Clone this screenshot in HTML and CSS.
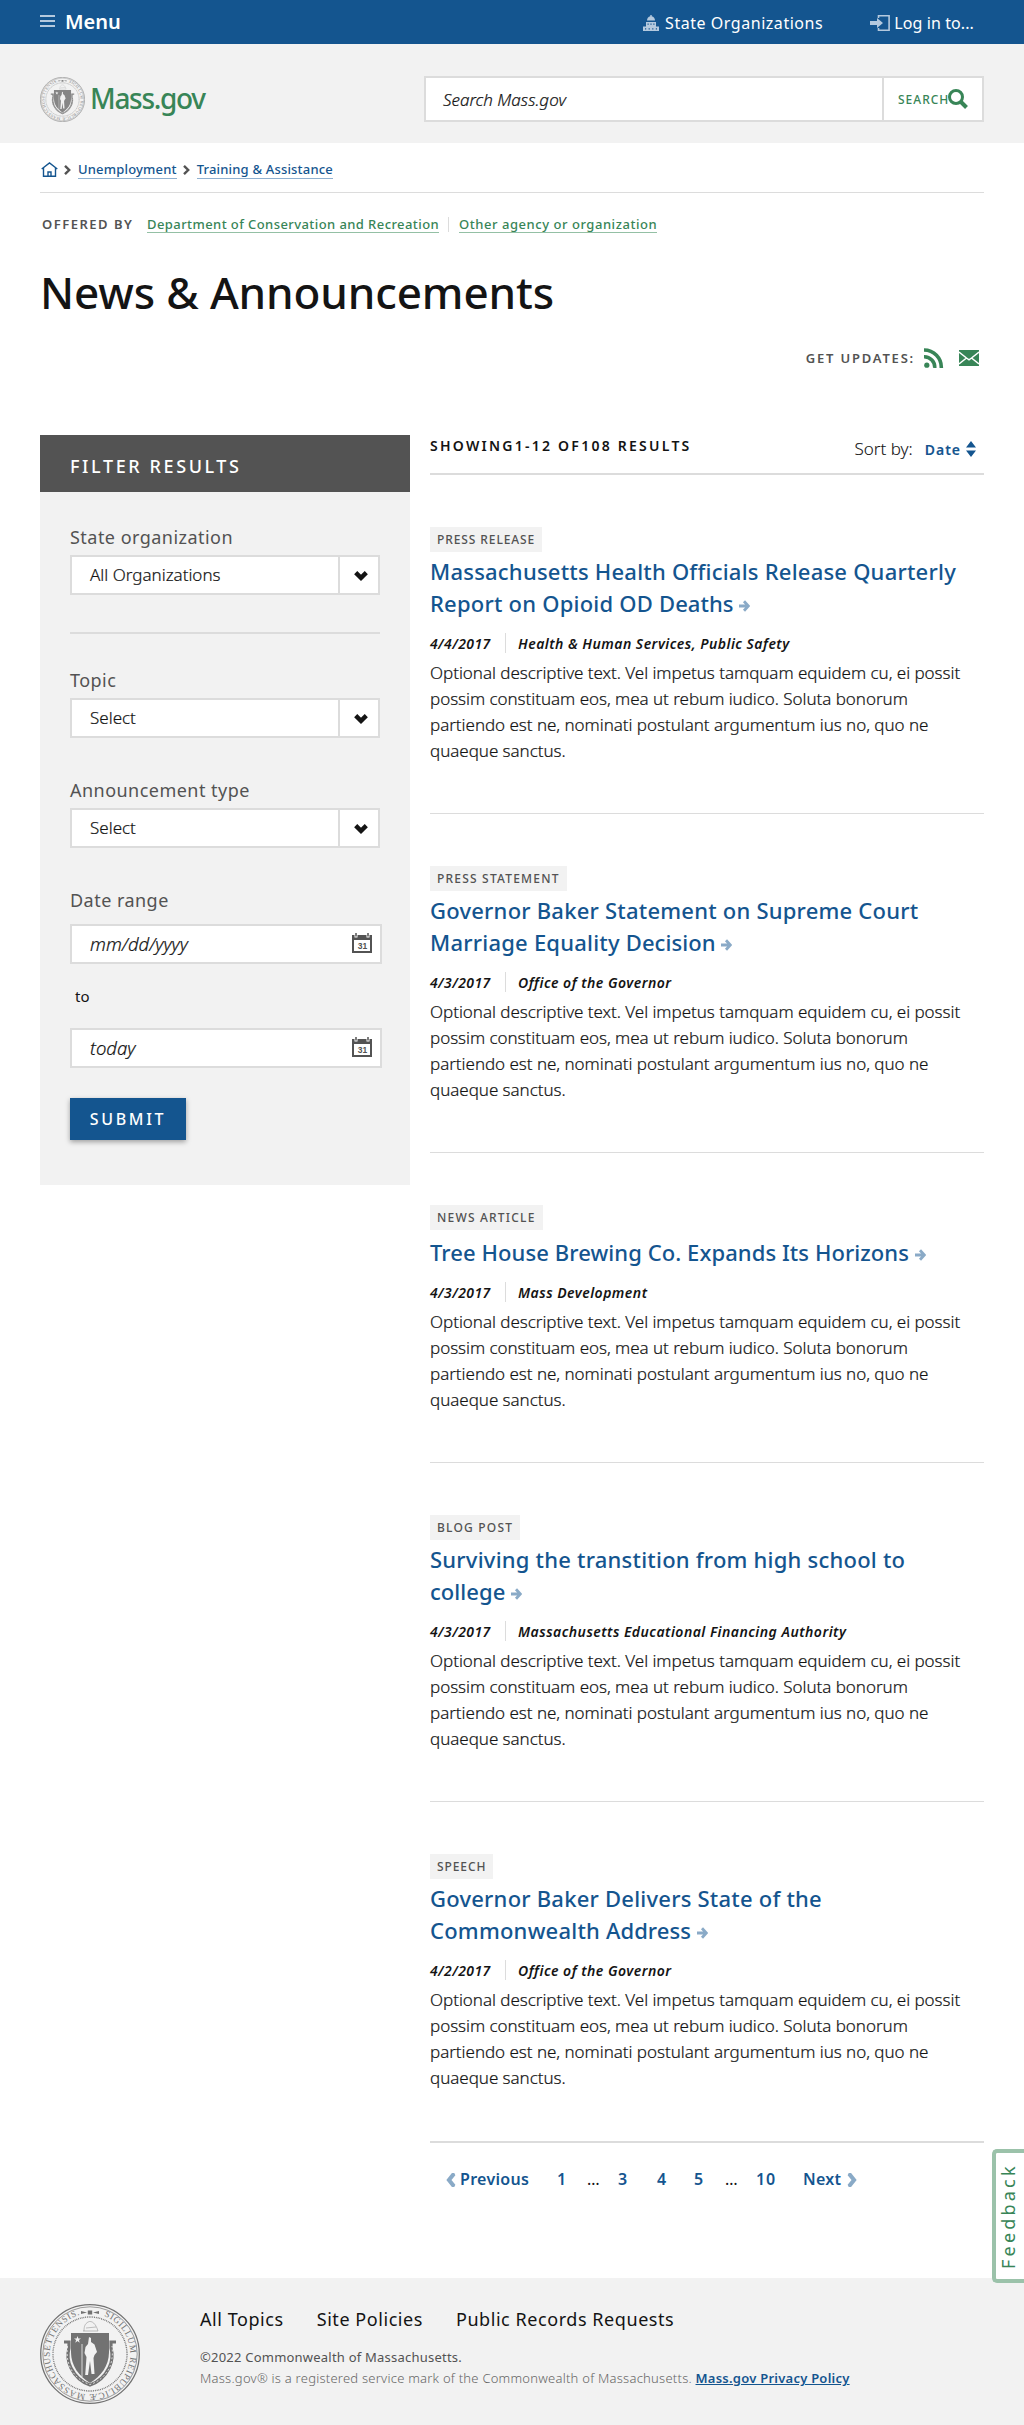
FILE: index.html
```html
<!DOCTYPE html>
<html lang="en">
<head>
<meta charset="utf-8">
<title>News &amp; Announcements | Mass.gov</title>
<link rel="stylesheet" href="styles.css">
</head>
<body>
<svg class="sprite" aria-hidden="true">
  <defs>
    <symbol id="arrow" viewBox="0 0 11 12"><path d="M0 6h8M5 1.2 9.4 6 5 10.8" fill="none" stroke="currentColor" stroke-width="2.8"/></symbol>
    <symbol id="chevron" viewBox="0 0 10 15"><path d="M4 0H1.500L.3 2.300 4.500 7.500.3 12.700 1.500 15H4l6-7.500z" fill="currentColor"/></symbol>
    <symbol id="down" viewBox="0 0 14 10"><path d="M1.700 1.700 7 6.800l5.300-5.100" fill="none" stroke="currentColor" stroke-width="4.500"/></symbol>
    <symbol id="crumb" viewBox="0 0 7 10"><path d="M1 .9 5.200 5 1 9.100" fill="none" stroke="currentColor" stroke-width="2.400"/></symbol>
    <symbol id="calendar" viewBox="0 0 20 20">
      <path d="M0 2h2.500v2.500h3V2h9v2.500h3V2H20v18H0zm2 5v11h16V7z" fill="currentColor" fill-rule="evenodd"/>
      <path d="M4 0v3.500M16 0v3.500" stroke="currentColor" stroke-width="1.500"/>
      <text x="10.500" y="15.800" text-anchor="middle" class="calendar-day">31</text>
    </symbol>
    <symbol id="seal" viewBox="0 0 100 100">
      <g fill="none" stroke="currentColor">
        <circle cx="50" cy="50" r="49.300" stroke-width="1.300"/>
        <circle cx="50" cy="50" r="47.200" stroke-width=".7"/>
        <circle cx="50" cy="50" r="37" stroke-width="1.400" stroke-dasharray=".9 .9"/>
      </g>
      <path id="ring" d="M63 11.800A40.300 40.300 0 1 1 41 10.700" fill="none"/>
      <text class="seal-text"><textPath href="#ring" startOffset="1" textLength="228">SIGILLUM REIPUBLICÆ MASSACHUSETTENSIS.</textPath></text>
      <path d="M41 7l6 1.500-6 1.500zM59 7l-6 1.500 6 1.500zM47.800 6.500h4.400v4h-4.400z" fill="currentColor"/>
      <path d="M44 27c0-5 1-7 4-9 4-2 8 2 10 9M43 27h15M46 24l10-1" fill="none" stroke="currentColor" stroke-width=".7" opacity=".6"/>
      <path d="M31 29h38v19c0 14-8 24-19 31-11-7-19-17-19-31z" fill="currentColor"/>
      <path d="M24 38h5v6c-2 7-1 14 2 20 4 8 10 14 19 17 9-3 15-9 19-17 3-6 4-13 2-20v-6h5" fill="none" stroke="currentColor" stroke-width="3.200"/>
      <path d="M27.500 42c-1 10 0 17 4 24 5 8 11 12 18.500 14.500C58 78 64 73 69 65c3-7 4-14 3-23" fill="none" stroke="#f2f2f2" stroke-width=".8" stroke-dasharray="2 2"/>
      <path d="m37.500 32 .9 2.500h2.600l-2.100 1.600.8 2.600-2.200-1.600-2.200 1.600.8-2.600-2.100-1.600h2.600zM49 33l2 1v4l3.500 2.500L57 48l-2.500 3-1 3 1 16h-3l-1.500-13-2 14h-2.800l1.300-18-2-4 1-6 2.500-3z" fill="#f2f2f2"/>
      <path d="M42 40v33" stroke="#f2f2f2" stroke-width=".8"/>
    </symbol>
  </defs>
</svg>

<nav class="topbar">
  <button class="menu"><svg width="15" height="12" viewBox="0 0 15 12"><path d="M0 1h15M0 6h15M0 11h15" stroke="#b4c9de" stroke-width="2"/></svg><span>Menu</span></button>
  <div class="topbar-links">
    <a class="topbar-link"><svg width="16" height="16" viewBox="0 0 16 16" fill="#b4c9de"><path d="M7.300 0h1.400v1.300c2 .4 3.300 2 3.300 4.200H4c0-2.200 1.300-3.800 3.300-4.200z"/><path d="M3 7h10v4.500h3V16H0v-4.500h3zm1.500 1.500v1.300h1.200V8.500zm2.900 0v1.300h1.200V8.500zm2.900 0v1.300h1.200V8.500zM2 13.200v1.200h1.200v-1.200zm3.600 0v1.200h1.200v-1.200zm3.600 0v1.200h1.200v-1.200zm3.600 0v1.200H14v-1.200z" fill-rule="evenodd"/></svg>State Organizations</a>
    <a class="topbar-link login"><svg width="20" height="16" viewBox="0 0 20 16"><path d="M8.500 3V.8h10.600v14.400H8.500V13" fill="none" stroke="#b4c9de" stroke-width="1.600"/><path d="M0 6h7V3l6 5-6 5v-3H0z" fill="#b4c9de"/></svg>Log in to...</a>
  </div>
</nav>

<header class="header">
  <a class="logo"><svg class="logo-seal" width="45" height="45"><use href="#seal"/></svg><span>Mass.gov</span></a>
  <form class="search">
    <span class="search-field">Search Mass.gov</span>
    <span class="search-button"><span>SEARCH</span><svg width="20" height="20" viewBox="0 0 20 20"><path d="m13 13 5.500 5.500" stroke="#388557" stroke-width="4"/><circle cx="8" cy="8" r="6.500" fill="none" stroke="#388557" stroke-width="3"/></svg></span>
  </form>
</header>

<main class="page">
  <nav class="breadcrumbs">
    <svg class="home" width="17" height="15" viewBox="0 0 17 15"><path d="M.7 7 8.500.9 16.300 7M2.500 6v8.200h12V6M7 14v-4h3v4" fill="none" stroke="#14558f" stroke-width="1.400"/></svg>
    <svg class="sep" width="7" height="10"><use href="#crumb"/></svg>
    <a>Unemployment</a>
    <svg class="sep" width="7" height="10"><use href="#crumb"/></svg>
    <a>Training &amp; Assistance</a>
  </nav>
  <div class="offered"><span class="offered-label">OFFERED BY</span><a>Department of Conservation and Recreation</a><i></i><a class="agency">Other agency or organization</a></div>
  <h1>News &amp; Announcements</h1>
  <div class="updates"><span>GET UPDATES:</span>
    <svg width="20" height="20" viewBox="0 0 20 20"><circle cx="2.800" cy="17.200" r="2.600" fill="#388557"/><path d="M0 8.700A10.500 10.500 0 0 1 10.700 20M0 2a17.300 17.300 0 0 1 17.300 18" fill="none" stroke="#388557" stroke-width="3.600"/></svg>
    <svg class="mail" width="20" height="16" viewBox="0 0 20 16"><path d="M0 0h20v16H0z" fill="#388557"/><path d="m0 2 7.500 6L10 9.800 12.500 8 20 2M0 14l7.500-6M20 14l-7.500-6" fill="none" stroke="#fff" stroke-width="1.500"/></svg>
  </div>

  <div class="columns">
    <aside class="filter">
      <h2>FILTER RESULTS</h2>
      <form class="filter-form">
        <label>State organization</label>
        <div class="select"><span>All Organizations</span><b><svg width="14" height="10"><use href="#down"/></svg></b></div>
        <hr>
        <label>Topic</label>
        <div class="select spaced"><span>Select</span><b><svg width="14" height="10"><use href="#down"/></svg></b></div>
        <label>Announcement type</label>
        <div class="select spaced"><span>Select</span><b><svg width="14" height="10"><use href="#down"/></svg></b></div>
        <label class="range">Date range</label>
        <div class="date"><span>mm/dd/yyyy</span><svg width="20" height="20"><use href="#calendar"/></svg></div>
        <p class="to">to</p>
        <div class="date"><span>today</span><svg width="20" height="20"><use href="#calendar"/></svg></div>
        <button class="submit" type="button">SUBMIT</button>
      </form>
    </aside>

    <section class="results">
      <div class="results-head">
        <h3>SHOWING1-12 OF108 RESULTS</h3>
        <div class="sort">Sort by:<a>Date</a><svg width="10" height="16" viewBox="0 0 10 16"><path d="m5 0 5 6.500H0zM0 9.500h10L5 16z" fill="#14558f"/></svg></div>
      </div>
      <article class="item">
        <div class="tag tight">PRESS RELEASE</div>
        <h2>Massachusetts Health Officials Release Quarterly Report on Opioid OD <span class="tail">Deaths <svg class="arrow"><use href="#arrow"/></svg></span></h2>
        <div class="meta"><span>4/4/2017</span><span>Health &amp; Human Services, Public Safety</span></div>
        <p>Optional descriptive text. Vel impetus tamquam equidem cu, ei possit possim constituam eos, mea ut rebum iudico. Soluta bonorum partiendo est ne, nominati postulant argumentum ius no, quo ne quaeque sanctus.</p>
      </article>
      <article class="item">
        <div class="tag">PRESS STATEMENT</div>
        <h2>Governor Baker Statement on Supreme Court Marriage Equality <span class="tail">Decision <svg class="arrow"><use href="#arrow"/></svg></span></h2>
        <div class="meta"><span>4/3/2017</span><span>Office of the Governor</span></div>
        <p>Optional descriptive text. Vel impetus tamquam equidem cu, ei possit possim constituam eos, mea ut rebum iudico. Soluta bonorum partiendo est ne, nominati postulant argumentum ius no, quo ne quaeque sanctus.</p>
      </article>
      <article class="item">
        <div class="tag">NEWS ARTICLE</div>
        <h2 class="tight">Tree House Brewing Co. Expands Its <span class="tail">Horizons <svg class="arrow"><use href="#arrow"/></svg></span></h2>
        <div class="meta"><span>4/3/2017</span><span>Mass Development</span></div>
        <p>Optional descriptive text. Vel impetus tamquam equidem cu, ei possit possim constituam eos, mea ut rebum iudico. Soluta bonorum partiendo est ne, nominati postulant argumentum ius no, quo ne quaeque sanctus.</p>
      </article>
      <article class="item">
        <div class="tag">BLOG POST</div>
        <h2>Surviving the transtition from high school to <span class="tail">college <svg class="arrow"><use href="#arrow"/></svg></span></h2>
        <div class="meta"><span>4/3/2017</span><span>Massachusetts Educational Financing Authority</span></div>
        <p>Optional descriptive text. Vel impetus tamquam equidem cu, ei possit possim constituam eos, mea ut rebum iudico. Soluta bonorum partiendo est ne, nominati postulant argumentum ius no, quo ne quaeque sanctus.</p>
      </article>
      <article class="item">
        <div class="tag tight">SPEECH</div>
        <h2>Governor Baker Delivers State of the Commonwealth <span class="tail">Address <svg class="arrow"><use href="#arrow"/></svg></span></h2>
        <div class="meta"><span>4/2/2017</span><span>Office of the Governor</span></div>
        <p>Optional descriptive text. Vel impetus tamquam equidem cu, ei possit possim constituam eos, mea ut rebum iudico. Soluta bonorum partiendo est ne, nominati postulant argumentum ius no, quo ne quaeque sanctus.</p>
      </article>
      <nav class="pagination">
        <a class="prev"><svg class="flip" width="10" height="14"><use href="#chevron"/></svg>Previous</a>
        <a class="one">1</a><span>…</span><a class="three">3</a><a class="four">4</a><a class="five">5</a><span>…</span><a class="ten">10</a>
        <a class="next">Next<svg width="10" height="14"><use href="#chevron"/></svg></a>
      </nav>
    </section>
  </div>
</main>

<footer class="footer">
  <svg class="footer-seal" width="100" height="100"><use href="#seal"/></svg>
  <div>
    <nav class="footer-links"><a>All Topics</a><a>Site Policies</a><a>Public Records Requests</a></nav>
    <p class="copyright">©2022 Commonwealth of Massachusetts.</p>
    <p class="mark">Mass.gov® is a registered service mark of the Commonwealth of Massachusetts. <a>Mass.gov Privacy Policy</a></p>
  </div>
</footer>
<a class="feedback">Feedback</a>
</body>
</html>
```
FILE: styles.css
```css
* { box-sizing: border-box; }
body { margin: 0; background: #fff; color: #141414; font: 300 17px/26px "Noto Sans", sans-serif; }
h1, h2, h3, p { margin: 0; }
svg { flex: none; display: block; }
.sprite { position: absolute; width: 0; height: 0; }

.topbar { height: 44px; padding: 0 50px 0 40px; display: flex; justify-content: space-between; background: #14558f; color: #fff; }
.menu { display: flex; align-items: center; gap: 10px; padding: 0 0 2px; border: 0; background: none; color: #fff; font: 600 20px/26px "Noto Sans", sans-serif; }
.menu span { padding-top: 2px; }
.topbar-links { display: flex; gap: 47px; }
.topbar-link { display: flex; align-items: center; gap: 6px; padding-top: 1px; font-size: 16px; font-weight: 400; letter-spacing: .54px; }
.topbar-link.login { gap: 4px; padding-top: 2px; letter-spacing: .1px; }

.header { height: 99px; padding: 32px 40px 0; display: flex; justify-content: space-between; align-items: flex-start; background: #f2f2f2; }
.logo { display: flex; align-items: center; gap: 5px; padding-top: 1px; color: #388557; font-size: 28px; font-weight: 500; letter-spacing: -1.300px; line-height: 45px; }
.logo span { margin-top: -2px; }
.logo-seal { color: #868686; }
.seal-text { font: 9px "Liberation Serif", serif; letter-spacing: 0; fill: currentColor; }
.search { width: 560px; height: 46px; display: flex; border: 2px solid #dcdcdc; background: #fff; }
.search-field { flex: 1; padding: 9px 17px 7px; font-style: italic; -webkit-text-stroke: .2px; }
.search-button { width: 100px; padding-left: 14px; display: flex; align-items: center; border-left: 2px solid #dcdcdc; color: #388557; font-size: 12px; font-weight: 500; letter-spacing: 1px; }
.search-button span { margin-right: -1px; padding-top: 1px; }
.search-button svg { margin-top: -1px; }

.page { padding: 0 40px; }
.breadcrumbs { height: 50px; padding: 18px 0 0 1px; display: flex; align-items: flex-start; border-bottom: 1px solid #dcdcdc; color: #535353; font-size: 13px; font-weight: 500; line-height: 17px; letter-spacing: .18px; }
.home { margin-top: 1px; }
.sep { margin: 4px 7px 0 6px; }
.breadcrumbs a { border-bottom: 1px solid #8fb0d0; color: #14558f; }
.offered { padding: 23px 0 0 2px; display: flex; align-items: flex-start; color: #388557; font-size: 13px; font-weight: 500; line-height: 16px; letter-spacing: .42px; }
.offered-label { width: 105px; color: #535353; font-weight: 600; letter-spacing: 1.500px; }
.offered a { border-bottom: 1px solid #94c0a5; }
.offered .agency { letter-spacing: .54px; }
.offered i { width: 1px; height: 15px; margin: 1px 10px 0 9px; background: #dcdcdc; }
h1 { margin-top: 29px; font-size: 44px; font-weight: 500; line-height: 60px; letter-spacing: -.12px; }
.updates { height: 20px; margin-top: 26px; padding-right: 5px; display: flex; align-items: center; justify-content: flex-end; color: #535353; font-size: 13px; font-weight: 600; letter-spacing: 1.800px; }
.updates span { margin-right: 9px; }
.mail { margin-left: 15px; }

.columns { margin-top: 67px; display: grid; grid-template-columns: 370px 554px; gap: 20px; align-items: start; }
.filter { height: 750px; background: #f2f2f2; }
.filter h2 { height: 57px; padding: 4px 30px 0; background: #535353; color: #fff; font-size: 18px; font-weight: 500; line-height: 55px; letter-spacing: 2.600px; }
.filter-form { padding: 32px 28px 0 30px; }
.filter label { display: block; height: 31px; color: #535353; font-size: 18px; font-weight: 400; letter-spacing: .47px; }
.filter .range { height: 37px; }
.select { width: 310px; height: 40px; display: flex; border: 2px solid #dcdcdc; background: #fff; }
.select.spaced { margin-bottom: 39px; }
.select span { flex: 1; padding: 5px 18px; -webkit-text-stroke: .2px; }
.select b { width: 40px; padding: 14px 0 0 14px; border-left: 2px solid #dcdcdc; }
.filter hr { width: 310px; height: 2px; margin: 37px 0 33px; border: 0; background: #dcdcdc; }
.date { width: 312px; height: 40px; padding: 5px 8px 0 18px; display: flex; justify-content: space-between; align-items: flex-start; border: 2px solid #dcdcdc; background: #fff; font-size: 18.500px; font-style: italic; }
.date span { -webkit-text-stroke: .2px; }
.date svg { margin-top: 2px; color: #535353; }
.calendar-day { font: 700 8.500px "Liberation Sans", sans-serif; fill: currentColor; }
.to { margin: 19px 0 19px 5px; font-size: 15px; font-weight: 400; }
.submit { width: 116px; height: 42px; margin-top: 30px; padding: 0; display: block; border: 0; background: #14558f; box-shadow: 0 2px 5px rgba(0,0,0,.35); color: #fff; font: 500 16px/42px "Noto Sans", sans-serif; letter-spacing: 2.700px; }

.results-head { height: 40px; display: flex; justify-content: space-between; align-items: flex-start; border-bottom: 2px solid #dcdcdc; }
.results-head h3 { margin-top: -2px; font-size: 14px; font-weight: 600; letter-spacing: 2.250px; }
.sort { padding-right: 8px; display: flex; align-items: center; -webkit-text-stroke: .1px; }
.sort a { margin: 2px 5px 0 12px; color: #14558f; font-size: 14px; font-weight: 600; letter-spacing: 1px; }
.sort svg { margin-top: -1px; }
.item { padding: 52px 0 49px; border-bottom: 1px solid #dcdcdc; }
.item:nth-of-type(5) { border-color: transparent; }
.tag { width: fit-content; height: 25px; padding: 0 7px; background: #f2f2f2; color: #535353; font-size: 12px; font-weight: 500; line-height: 25px; letter-spacing: 1.200px; }
.tag.tight { letter-spacing: .9px; }
.item h2 { margin-top: 5px; color: #14558f; font-size: 22px; font-weight: 500; line-height: 29px; letter-spacing: .22px; }
.item h2.tight { letter-spacing: .08px; }
.tail { white-space: nowrap; letter-spacing: .05px; }
.arrow { width: 11px; height: 12px; margin-top: 14px; display: inline-block; color: #8aaac7; }
.meta { height: 20px; margin-top: 15px; display: flex; font-size: 14px; font-style: italic; font-weight: 600; line-height: 22px; letter-spacing: .48px; }
.meta span:first-child { width: 76px; margin-right: 12px; border-right: 1px solid #dcdcdc; letter-spacing: .4px; }
.item p { margin-top: 7px; padding-right: 10px; letter-spacing: -.04px; -webkit-text-stroke: .2px; }
.pagination { height: 137px; padding: 23px 0 0 16px; display: flex; align-items: flex-start; border-top: 2px solid #dcdcdc; color: #14558f; font-size: 16px; font-weight: 600; letter-spacing: .3px; }
.pagination span { width: 14px; color: #141414; font-weight: 400; letter-spacing: 0; }
.pagination svg { margin-top: 1px; color: #8aaac7; }
.prev { width: 111px; display: flex; align-items: center; gap: 4px; }
.flip { transform: scaleX(-1); }
.one { width: 30px; }
.three { width: 39px; margin-left: 17px; }
.four { width: 37px; }
.five { width: 31px; }
.ten { width: 47px; margin-left: 17px; letter-spacing: .8px; }
.next { display: flex; align-items: center; gap: 6px; }

.footer { height: 147px; padding: 26px 40px 0; display: flex; gap: 60px; background: #f2f2f2; }
.footer-seal { color: #727272; }
.footer-links { display: flex; gap: 33px; font-size: 18px; font-weight: 400; line-height: 30px; letter-spacing: .56px; }
.copyright { margin-top: 13px; color: #535353; font-size: 13px; font-weight: 400; line-height: 21px; letter-spacing: .22px; }
.mark { color: #666; font-size: 13px; line-height: 21px; letter-spacing: .24px; }
.mark a { color: #14558f; font-weight: 600; text-decoration: underline; }
.feedback { position: absolute; right: 0; top: 2149px; width: 32px; height: 134px; border: 4px solid #9bc2aa; border-left: 0; border-radius: 0 5px 5px 0; background: #fff; color: #388557; font-size: 18px; font-weight: 400; line-height: 25px; letter-spacing: 3.200px; text-align: center; writing-mode: vertical-rl; transform: rotate(180deg); }
```
